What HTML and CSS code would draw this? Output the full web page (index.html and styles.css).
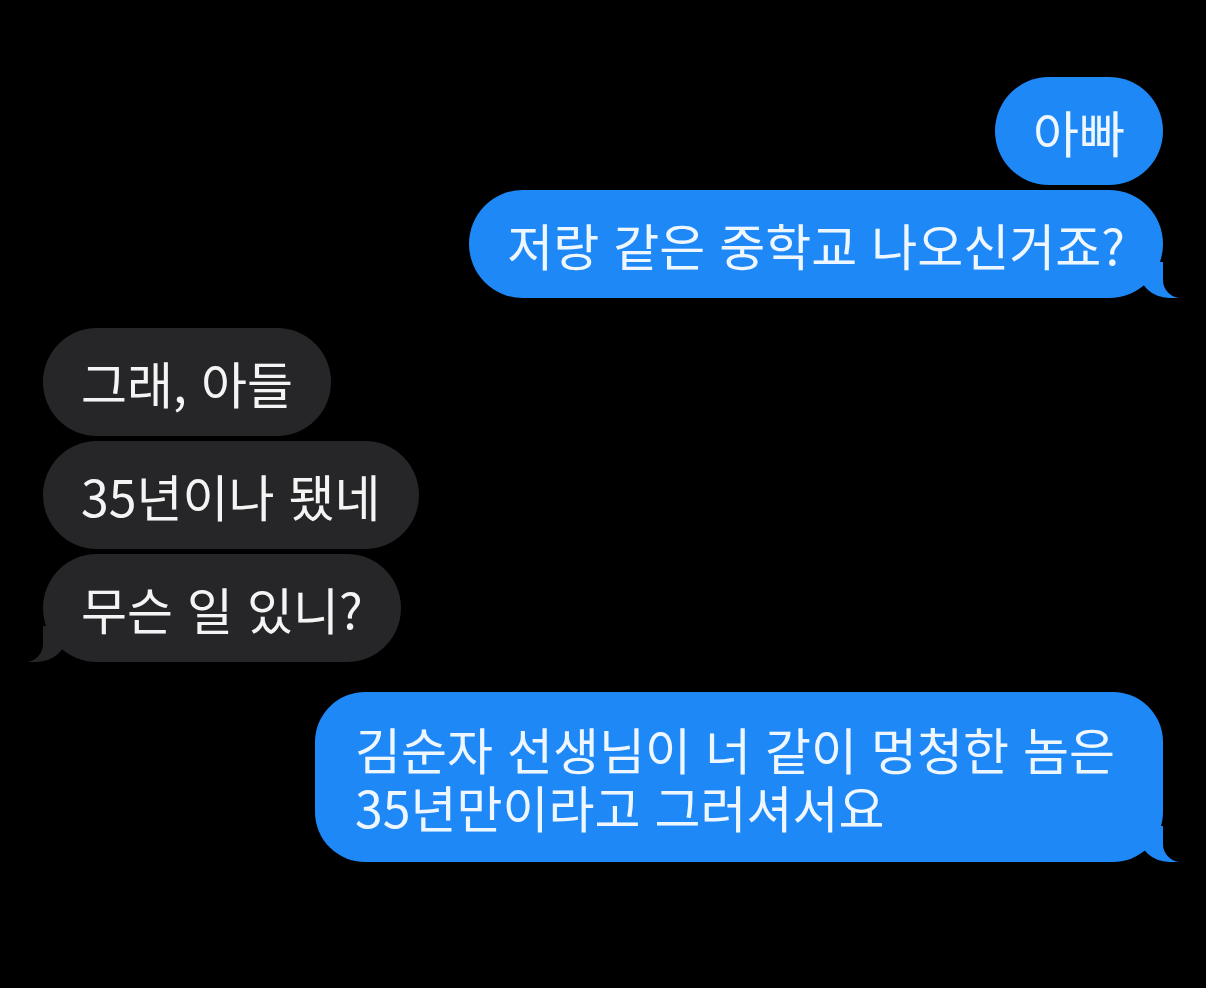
FILE: index.html
```html
<!DOCTYPE html>
<html lang="ko">
<head>
<meta charset="utf-8">
<title>Messages</title>
<link rel="stylesheet" href="styles.css">
</head>
<body>
<main class="thread">
  <section class="group group-sent">
    <div class="bubble sent">아빠</div>
    <div class="bubble sent tail">저랑 같은 중학교 나오신거죠?</div>
  </section>
  <section class="group group-received">
    <div class="bubble received">그래, 아들</div>
    <div class="bubble received">35년이나 됐네</div>
    <div class="bubble received tail">무슨 일 있니?</div>
  </section>
  <section class="group group-sent">
    <div class="bubble sent tail wide">김순자 선생님이 너 같이 멍청한 놈은<br>35년만이라고 그러셔서요</div>
  </section>
</main>
</body>
</html>
```

FILE: styles.css
```css
html, body {
  margin: 0;
  padding: 0;
  background: #000;
}

body {
  width: 1206px;
  height: 988px;
  overflow: hidden;
  font-family: "Noto Sans CJK KR", "Noto Sans", sans-serif;
}

.thread {
  display: flex;
  flex-direction: column;
  gap: 30px;
  padding: 77px 43px 0 43px;
}

.group {
  display: flex;
  flex-direction: column;
  gap: 5px;
}

.group-sent {
  align-items: flex-end;
}

.group-received {
  align-items: flex-start;
}

.bubble {
  position: relative;
  box-sizing: border-box;
  padding: 25px 38px;
  border-radius: 54px;
  font-size: 50px;
  line-height: 58px;
  color: #fff;
  white-space: nowrap;
}

.sent {
  background: #1e88f7;
  color: #eef6ff;
}

.received {
  background: #262628;
  color: #f4f4f4;
}

.wide {
  width: 848px;
  padding: 27px 40px;
  border-radius: 50px;
}

/* iOS-style tails */
.sent.tail::before {
  content: "";
  position: absolute;
  bottom: 0;
  right: -16px;
  width: 40px;
  height: 36px;
  background: #1e88f7;
  border-bottom-left-radius: 30px 28px;
}

.sent.tail::after {
  content: "";
  position: absolute;
  bottom: 0;
  right: -20px;
  width: 20px;
  height: 38px;
  background: #000;
  border-bottom-left-radius: 18px;
}

.received.tail::before {
  content: "";
  position: absolute;
  bottom: 0;
  left: -16px;
  width: 40px;
  height: 36px;
  background: #262628;
  border-bottom-right-radius: 30px 28px;
}

.received.tail::after {
  content: "";
  position: absolute;
  bottom: 0;
  left: -20px;
  width: 20px;
  height: 38px;
  background: #000;
  border-bottom-right-radius: 18px;
}
```
